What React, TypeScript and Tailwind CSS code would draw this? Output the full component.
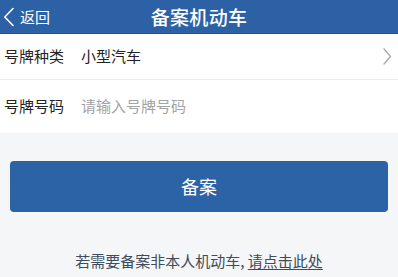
export default function App() {
  return (
    <div
      className="w-[398px] h-[277px] bg-[#f5f6f8] overflow-hidden"
      style={{ fontFamily: '"Noto Sans CJK SC", "Noto Sans", sans-serif' }}
    >
      {/* Header */}
      <div className="relative h-[34px] bg-[#2c62a5] border-b border-[#24548f] flex items-center justify-center">
        <div className="absolute left-[3px] top-0 h-full flex items-center text-white">
          <svg width="12" height="20" viewBox="0 0 12 20" fill="none" className="mr-[5px]">
            <polyline
              points="10,1.5 1.8,10 10,18.5"
              stroke="currentColor"
              strokeWidth="1.6"
              strokeLinecap="round"
              strokeLinejoin="round"
            />
          </svg>
          <span className="text-[15px] leading-none">返回</span>
        </div>
        <h1 className="text-white text-[19px] font-medium leading-none tracking-[0.3px]">
          备案机动车
        </h1>
      </div>

      {/* Form rows */}
      <div className="bg-white">
        <div className="h-[46px] flex items-center pl-[4px] pr-[6px] border-b border-[#ebebeb]">
          <span className="w-[77px] text-[15px] text-[#222]">号牌种类</span>
          <span className="flex-1 text-[15px] text-[#222]">小型汽车</span>
          <svg width="9" height="17" viewBox="0 0 9 17" fill="none">
            <polyline
              points="1,1 7.5,8.5 1,16"
              stroke="#ababab"
              strokeWidth="1.4"
              strokeLinecap="round"
              strokeLinejoin="round"
            />
          </svg>
        </div>
        <div className="h-[53px] flex items-center pl-[4px] pr-[4px]">
          <span className="w-[77px] text-[15px] text-[#222]">号牌号码</span>
          <span className="flex-1 text-[15px] text-[#a3a3a3]">请输入号牌号码</span>
        </div>
      </div>

      {/* Submit */}
      <div className="px-[10px] pt-[28px]">
        <button className="w-full h-[51px] rounded-[4px] bg-[#2c63a6] text-white text-[18px]">
          备案
        </button>
      </div>

      <p className="mt-[41px] text-center text-[15px] text-[#3e4b5b] leading-none">
        若需要备案非本人机动车,{" "}
        <span className="underline underline-offset-2">请点击此处</span>
      </p>
    </div>
  );
}
